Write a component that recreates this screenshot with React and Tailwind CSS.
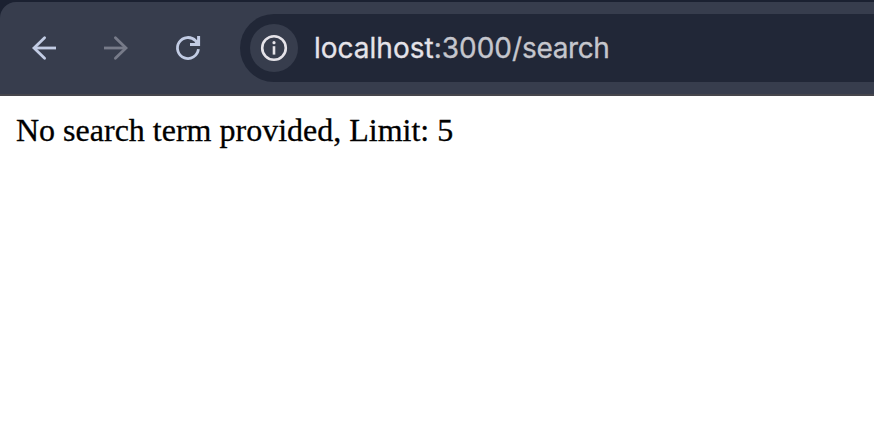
function BackIcon() {
  return (
    <svg className="size-8" viewBox="0 0 32 32" fill="none" stroke="#c2cce4" strokeWidth="2.8">
      <path d="M28 16H6" />
      <path d="M16.6 5.7L6 16L16.6 26.3" strokeLinecap="round" />
    </svg>
  );
}

function ForwardIcon() {
  return (
    <svg className="size-8" viewBox="0 0 32 32" fill="none" stroke="#777b89" strokeWidth="2.8">
      <path d="M4 16H26" />
      <path d="M15.4 5.7L26 16L15.4 26.3" strokeLinecap="round" />
    </svg>
  );
}

function ReloadIcon() {
  return (
    <svg className="size-8" viewBox="0 0 32 32" fill="none" stroke="#c2cce4" strokeWidth="2.8">
      <path d="M26.4 17.2A10.5 10.5 0 1 1 23.6 8.8L26 11.4" />
      <path d="M26.6 4V12.6H18" strokeWidth="3" />
      <path d="M21 12.6L26.6 7V12.6Z" fill="#c2cce4" stroke="none" />
    </svg>
  );
}

function InfoIcon() {
  return (
    <svg className="size-8" viewBox="0 0 32 32" fill="none">
      <circle cx="16" cy="16" r="11.8" stroke="#e5e3e9" strokeWidth="2.6" />
      <rect x="14.7" y="14.2" width="2.6" height="8.4" fill="#e5e3e9" />
      <circle cx="16" cy="10.7" r="1.6" fill="#e5e3e9" />
    </svg>
  );
}

export default function App() {
  return (
    <div className="flex h-[428px] w-[874px] flex-col overflow-hidden bg-white">
      <header className="h-24 bg-[#1b2131] pt-0.5">
        <div className="flex h-[94px] items-center rounded-tl-[16px] bg-[#373d4d] pl-7 shadow-[inset_0_-2px_0_#46464c]">
          <nav className="flex w-[212px] gap-10 pb-0.5">
            <button aria-label="Back"><BackIcon /></button>
            <button aria-label="Forward"><ForwardIcon /></button>
            <button aria-label="Reload"><ReloadIcon /></button>
          </nav>
          <div className="mb-0.5 flex h-[68px] flex-1 items-center rounded-l-full bg-[#212737] pl-2.5">
            <div className="flex size-12 items-center justify-center rounded-full bg-[#373d4d]">
              <InfoIcon />
            </div>
            <div className="ml-4 whitespace-nowrap font-['Inter',sans-serif] text-[28px] leading-8 text-[#c5c6cd] [-webkit-text-stroke:0.3px]">
              <span className="text-[#e5e3e9]">localhost</span>:3000/<span className="tracking-[-0.4px]">search</span>
            </div>
          </div>
        </div>
      </header>
      <main className="px-4 pt-4 font-['Liberation_Serif',serif] text-[32px] leading-9 text-black [-webkit-text-stroke:0.3px]">
        No search term provided, Limit: 5
      </main>
    </div>
  );
}
